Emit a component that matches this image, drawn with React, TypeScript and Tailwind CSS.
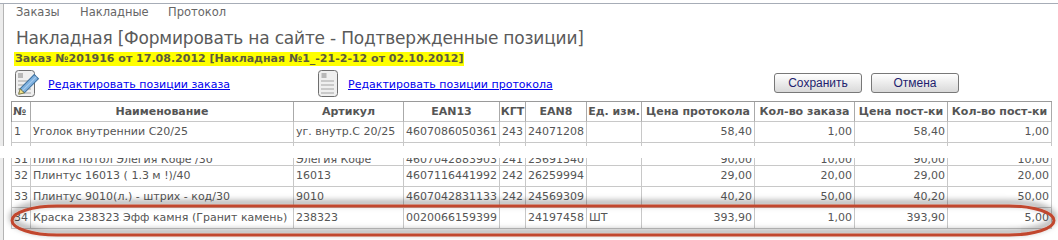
import React from "react";

const cols =
  "grid grid-cols-[19px_263px_110px_96px_26px_61px_55px_113px_100px_93px_104px]";

type Row = string[];

const head: Row = [
  "№",
  "Наименование",
  "Артикул",
  "EAN13",
  "КГТ",
  "EAN8",
  "Ед. изм.",
  "Цена протокола",
  "Кол-во заказа",
  "Цена пост-ки",
  "Кол-во пост-ки",
];

const first: Row = ["1", "Уголок внутреннии С20/25", "уг. внутр.С 20/25", "4607086050361", "243", "24071208", "", "58,40", "1,00", "58,40", "1,00"];
const cut: Row = ["31", "Плитка потол Элегия Кофе /30", "Элегия Кофе", "4607042883903", "241", "25691340", "", "90,00", "10,00", "90,00", "10,00"];
const rest: Row[] = [
  ["32", "Плинтус 16013 ( 1.3 м !)/40", "16013", "4607116441992", "242", "26259994", "", "29,00", "20,00", "29,00", "20,00"],
  ["33", "Плинтус 9010(л.) - штрих - код/30", "9010", "4607042831133", "242", "24569309", "", "40,20", "50,00", "40,20", "50,00"],
  ["34", "Краска 238323 Эфф камня (Гранит камень)", "238323", "0020066159399", "", "24197458", "ШТ", "393,90", "1,00", "393,90", "5,00"],
];

function BodyRow({ row, low = false }: { row: Row; low?: boolean }) {
  return (
    <div className={`${cols} h-[21px] border-l border-[#c8c8c8]`}>
      {row.map((c, i) => (
        <div
          key={i}
          className={`border-r border-b border-[#c8c8c8] px-[2px] whitespace-nowrap overflow-hidden ${
            low ? "pt-[5px] leading-[20px]" : "leading-[20px]"
          } ${i >= 7 ? "text-right" : "text-left"}`}
        >
          {c}
        </div>
      ))}
    </div>
  );
}

function LeftStrip() {
  return <div className="w-[4px] shrink-0 bg-[#ececec] border-r border-[#b4b4b4]" />;
}

function EditIcon() {
  return (
    <svg width="29" height="29" viewBox="0 0 29 29">
      <rect x="1.5" y="1.5" width="19" height="26" rx="3" fill="#efefef" stroke="#6e6e6e" />
      <rect x="4" y="4" width="5" height="5" fill="#b8b8b8" />
      <line x1="4" y1="12" x2="17" y2="12" stroke="#bdbdbd" strokeWidth="1.5" />
      <line x1="4" y1="16" x2="17" y2="16" stroke="#bdbdbd" strokeWidth="1.5" />
      <line x1="4" y1="20" x2="17" y2="20" stroke="#bdbdbd" strokeWidth="1.5" />
      <line x1="4" y1="24" x2="17" y2="24" stroke="#bdbdbd" strokeWidth="1.5" />
      <g transform="rotate(-45 16 14)">
        <rect x="5" y="11" width="20" height="6" fill="#7fb2e0" stroke="#3b6f9e" />
        <line x1="5" y1="14" x2="25" y2="14" stroke="#a9cdef" strokeWidth="1" />
        <polygon points="5,11 0,14 5,17" fill="#f3e28a" stroke="#6b6b3a" strokeWidth="0.8" />
      </g>
    </svg>
  );
}

function DocIcon() {
  return (
    <svg width="22" height="29" viewBox="0 0 22 29">
      <rect x="1.5" y="1.5" width="19" height="26" rx="3" fill="#efefef" stroke="#6e6e6e" />
      <rect x="4.5" y="4" width="5" height="5" fill="#b8b8b8" />
      <line x1="4" y1="12" x2="17" y2="12" stroke="#bdbdbd" strokeWidth="1.5" />
      <line x1="4" y1="16" x2="17" y2="16" stroke="#bdbdbd" strokeWidth="1.5" />
      <line x1="4" y1="20" x2="17" y2="20" stroke="#bdbdbd" strokeWidth="1.5" />
      <line x1="4" y1="24" x2="17" y2="24" stroke="#bdbdbd" strokeWidth="1.5" />
    </svg>
  );
}

function Btn({ label }: { label: string }) {
  return (
    <button className="w-[88px] h-[20px] rounded-[3px] border border-[#787878] bg-gradient-to-b from-white to-[#d9d9d9] font-['Liberation_Sans',sans-serif] text-[12px] leading-[18px] text-[#1e1e6e]">
      {label}
    </button>
  );
}

export default function App() {
  return (
    <div className="relative w-[1058px] h-[240px] overflow-hidden bg-white font-['DejaVu_Sans',sans-serif] text-[11px] text-[#555]">
      <div className="h-[3px]" />
      <div className="h-[1px] bg-[#a7adb7]" />

      {/* upper part */}
      <div className="flex h-[142px]">
        <LeftStrip />
        <div className="flex-1 flex flex-col">
          <div className="flex h-[17px] items-center pl-[12px] text-[11.5px] text-[#666]">
            <span className="w-[64px]">Заказы</span>
            <span className="w-[88px]">Накладные</span>
            <span>Протокол</span>
          </div>
          <div className="mt-[4px] h-[26px] pl-[12px] text-[17px] leading-[26px] text-[#5a5a5a] tracking-[-0.2px] whitespace-nowrap">
            Накладная [Формировать на сайте - Подтвержденные позиции]
          </div>
          <div className="mt-[1px] ml-[10px] self-start h-[14px] bg-[#ffff00] px-[1px] font-bold leading-[14px] text-[#5c5c3c] whitespace-nowrap">
            Заказ №201916 от 17.08.2012 [Накладная №1_-21-2-12 от 02.10.2012]
          </div>
          <div className="flex h-[35px] items-center pl-[10px]">
            <div className="flex w-[303px] items-center gap-[5px]">
              <EditIcon />
              <a href="#" className="text-[#0000ee] underline leading-[14px] mt-[2px]">
                Редактировать позиции заказа
              </a>
            </div>
            <div className="flex w-[457px] items-center gap-[9px]">
              <DocIcon />
              <a href="#" className="text-[#0000ee] underline leading-[14px] mt-[2px]">
                Редактировать позиции протокола
              </a>
            </div>
            <div className="flex gap-[9px] -mt-[2px]">
              <Btn label="Сохранить" />
              <Btn label="Отмена" />
            </div>
          </div>
          <div className="ml-[7px] w-[1041px]">
            <div className={`${cols} h-[21px] border-t border-l border-[#9a9a9a] font-bold`}>
              {head.map((h, i) => (
                <div
                  key={i}
                  className={`border-r border-b border-r-[#aaaaaa] border-b-[#c8c8c8] leading-[20px] whitespace-nowrap overflow-hidden ${
                    i === 0 ? "text-left pl-[1px]" : "text-center"
                  }`}
                >
                  {h}
                </div>
              ))}
            </div>
            <BodyRow row={first} />
            <div className="h-[3px] overflow-hidden">
              <BodyRow row={["", "", "", "", "", "", "", "", "", "", ""]} />
            </div>
          </div>
        </div>
      </div>

      {/* torn gap */}
      <div className="h-[12px] bg-white" />

      {/* lower part */}
      <div className="flex h-[82px]">
        <LeftStrip />
        <div className="flex-1 flex flex-col">
          <div className="ml-[7px] w-[1041px]">
            <div className="h-[8px] overflow-hidden flex flex-col justify-end">
              <div className="shrink-0">
                <BodyRow row={cut} low />
              </div>
            </div>
            {rest.map((r, i) => (
              <BodyRow key={i} row={r} />
            ))}
          </div>
        </div>
      </div>

      {/* annotation ellipse */}
      <svg className="absolute left-0 top-0 pointer-events-none" width="1058" height="240">
        <defs>
          <filter id="sh" x="-5%" y="-60%" width="110%" height="220%">
            <feDropShadow dx="0" dy="-3" stdDeviation="3" floodColor="#000" floodOpacity="0.6" />
          </filter>
        </defs>
        <rect
          x="12"
          y="206"
          width="1042"
          height="29"
          rx="45"
          ry="14.5"
          fill="none"
          stroke="#c1462f"
          strokeWidth="3"
          filter="url(#sh)"
        />
      </svg>
    </div>
  );
}
